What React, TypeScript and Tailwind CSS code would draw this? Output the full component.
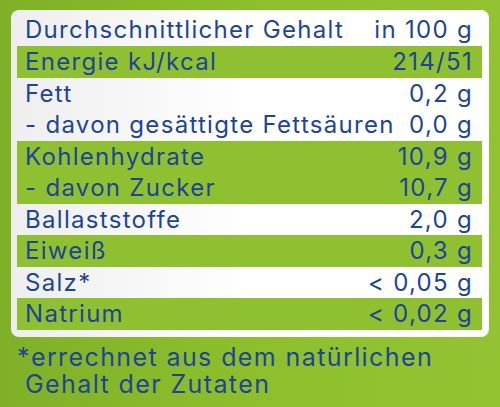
const rows: { label: string[]; value: string[]; band: boolean }[] = [
  { label: ["Energie kJ/kcal"], value: ["214/51"], band: true },
  { label: ["Fett", "- davon gesättigte Fettsäuren"], value: ["0,2 g", "0,0 g"], band: false },
  { label: ["Kohlenhydrate", "- davon Zucker"], value: ["10,9 g", "10,7 g"], band: true },
  { label: ["Ballaststoffe"], value: ["2,0 g"], band: false },
  { label: ["Eiweiß"], value: ["0,3 g"], band: true },
  { label: ["Salz*"], value: ["< 0,05 g"], band: false },
  { label: ["Natrium"], value: ["< 0,02 g"], band: true },
];

export default function App() {
  return (
    <div
      className="w-[500px] h-[407px] overflow-hidden bg-gradient-to-r from-[#7fb027] via-[#8dbf2c] to-[#93c332] text-[#1d4596] pt-[10px] px-[11px]"
      style={{ fontFamily: "Inter, 'Noto Sans', sans-serif" }}
    >
      <div className="rounded-[8px] bg-gradient-to-r from-[#eeeeee] via-white to-white pl-[6px] pr-[7px] pt-[4px] pb-[7px] text-[24px] leading-[31.5px] tracking-[1.3px]">
        <div className="flex justify-between pl-[8px] pr-[9px] h-[32px] items-center">
          <span>Durchschnittlicher Gehalt</span>
          <span>in 100 g</span>
        </div>
        {rows.map((r, i) => (
          <div
            key={i}
            className={`flex justify-between pl-[8px] pr-[9px] ${r.band ? "bg-[#8fc031]" : ""}`}
          >
            <div className="flex flex-col">
              {r.label.map((l) => (
                <span key={l}>{l}</span>
              ))}
            </div>
            <div className="flex flex-col items-end">
              {r.value.map((v) => (
                <span key={v}>{v}</span>
              ))}
            </div>
          </div>
        ))}
      </div>
      <div className="pl-[6px] pt-[7px] text-[25px] leading-[27px] tracking-[1.4px]">
        <div>*errechnet aus dem natürlichen</div>
        <div className="pl-[8px]">Gehalt der Zutaten</div>
      </div>
    </div>
  );
}
